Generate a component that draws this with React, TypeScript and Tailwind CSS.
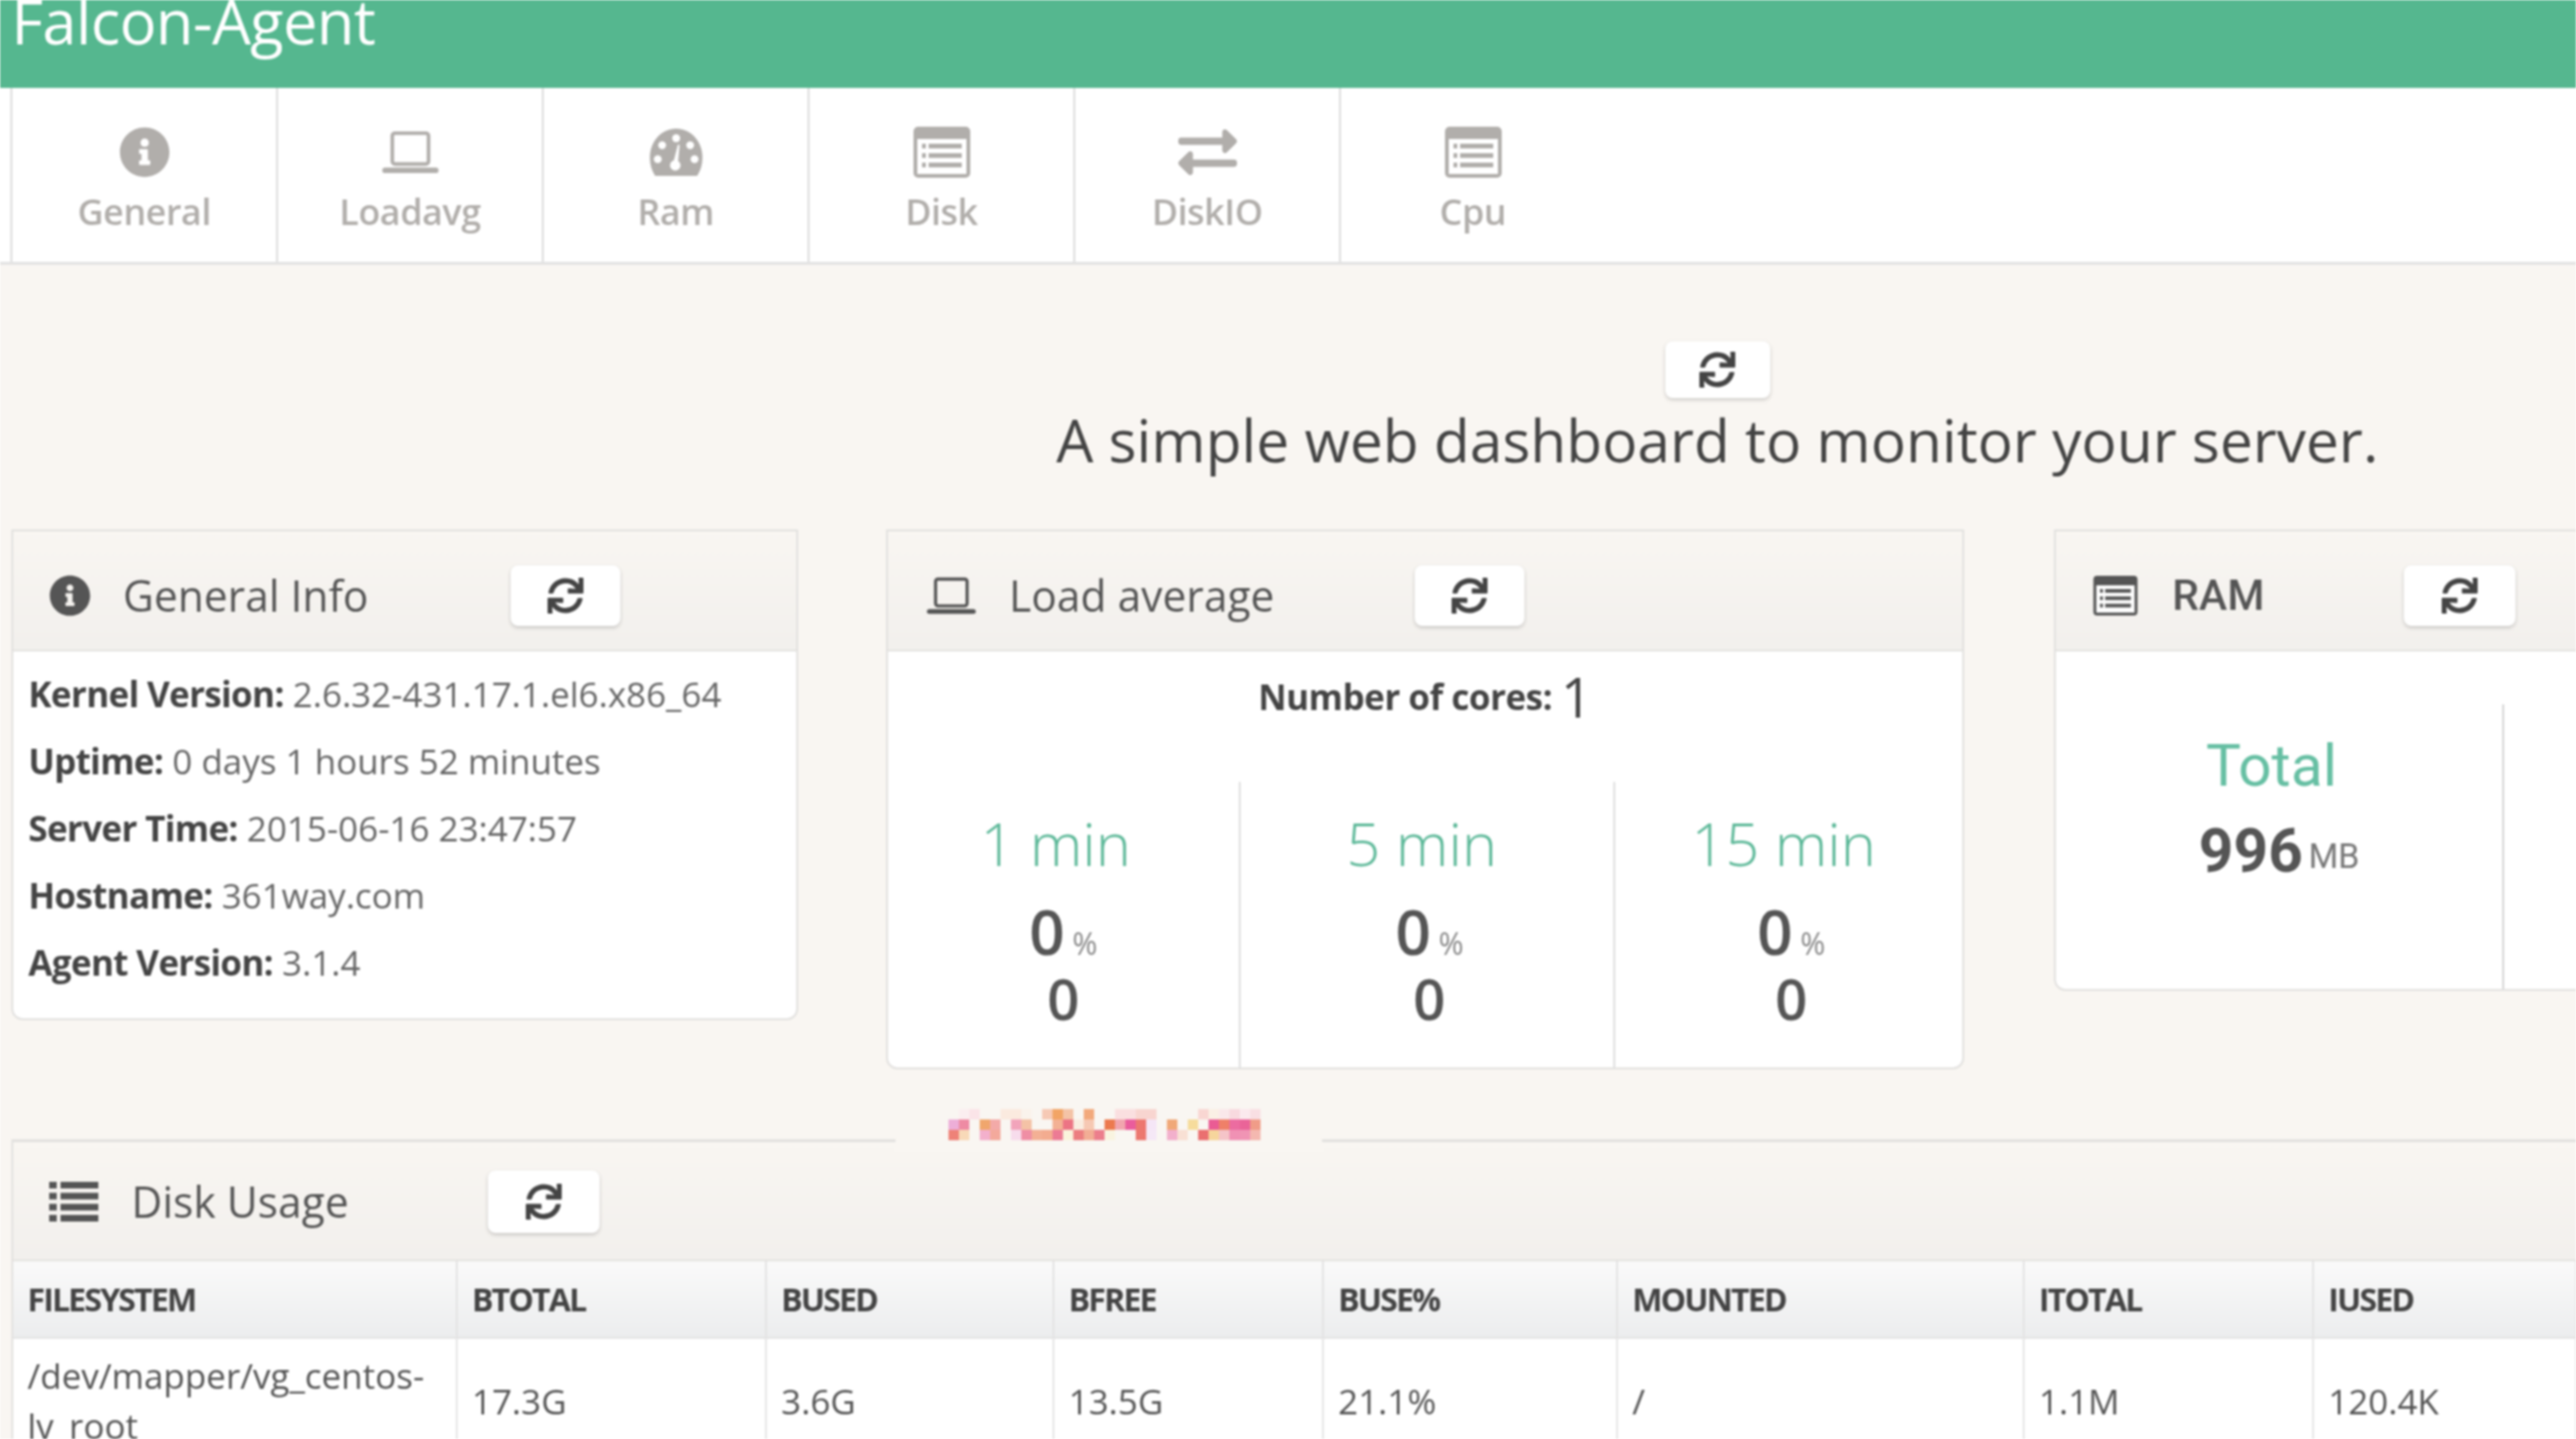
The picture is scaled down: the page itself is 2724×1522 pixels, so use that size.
import React from "react";
import { FaExchangeAlt, FaInfoCircle, FaSync } from "react-icons/fa";

type IconProps = { className?: string };

const LaptopIcon = ({ className }: IconProps) => (
  <svg viewBox="0 0 60 48" className={className} fill="none" stroke="currentColor">
    <rect x="10" y="3" width="40" height="34" rx="3" strokeWidth="4" />
    <path d="M2 44h56" strokeWidth="6" strokeLinecap="round" />
  </svg>
);

const ListAltIcon = ({ className }: IconProps) => (
  <svg viewBox="0 0 60 54" className={className} fill="currentColor">
    <rect x="0" y="0" width="60" height="54" rx="5" />
    <rect x="4" y="13" width="52" height="37" fill="#fff" />
    <rect x="9" y="18" width="4" height="5" />
    <rect x="9" y="28" width="4" height="5" />
    <rect x="9" y="38" width="4" height="5" />
    <rect x="16" y="18" width="35" height="5" />
    <rect x="16" y="28" width="35" height="5" />
    <rect x="16" y="38" width="35" height="5" />
  </svg>
);

const ListIcon = ({ className }: IconProps) => (
  <svg viewBox="0 0 52 42" className={className} fill="currentColor">
    <rect x="0" y="0" width="8" height="7" />
    <rect x="12" y="0" width="40" height="7" />
    <rect x="0" y="11.6" width="8" height="7" />
    <rect x="12" y="11.6" width="40" height="7" />
    <rect x="0" y="23.3" width="8" height="7" />
    <rect x="12" y="23.3" width="40" height="7" />
    <rect x="0" y="35" width="8" height="7" />
    <rect x="12" y="35" width="40" height="7" />
  </svg>
);

const GaugeIcon = ({ className }: IconProps) => (
  <svg viewBox="0 0 60 54" className={className} fill="currentColor">
    <path d="M6 54C2 48 0 41 0 33 0 15 13 0 30 0s30 15 30 33c0 8-2 15-6 21z" />
    <g fill="#fff">
      <circle cx="30" cy="11" r="4.5" />
      <circle cx="14" cy="19" r="4.5" />
      <circle cx="46" cy="19" r="4.5" />
      <circle cx="9" cy="35" r="4.5" />
      <circle cx="51" cy="35" r="4.5" />
      <circle cx="29" cy="42" r="6" />
      <path d="M27 38l5-20 2 1-2 21z" />
    </g>
  </svg>
);

const RefreshButton = ({ className }: IconProps) => (
  <button className={`flex shrink-0 items-center justify-center rounded-lg bg-white text-[#444] shadow-[0_2px_4px_rgba(0,0,0,0.18)] ${className}`}>
    <FaSync className="h-[38px] w-[38px]" />
  </button>
);

const tabs = [
  { label: "General", icon: <FaInfoCircle className="h-[54px] w-[54px]" /> },
  { label: "Loadavg", icon: <LaptopIcon className="h-[46px] w-[60px]" /> },
  { label: "Ram", icon: <GaugeIcon className="h-[50px] w-[62px]" /> },
  { label: "Disk", icon: <ListAltIcon className="h-[54px] w-[64px]" /> },
  { label: "DiskIO", icon: <FaExchangeAlt className="h-[62px] w-[62px]" /> },
  { label: "Cpu", icon: <ListAltIcon className="h-[54px] w-[64px]" /> },
];

const CardHeader = ({
  icon,
  title,
  titleClass,
  iconClass,
  buttonClass,
  headerClass,
}: {
  icon: React.ReactNode;
  title: string;
  titleClass: string;
  iconClass: string;
  buttonClass: string;
  headerClass: string;
}) => (
  <div className={`flex items-center border-b-2 border-[#e4e3e0] bg-gradient-to-b from-[#f9f6f2] to-[#f2f0ed] ${headerClass}`}>
    <span className={`flex shrink-0 items-center text-[#555] ${iconClass}`}>{icon}</span>
    <span className={`shrink-0 text-[45px] font-medium text-[#555] ${titleClass}`}>{title}</span>
    <RefreshButton className={buttonClass} />
  </div>
);

const generalInfo = [
  ["Kernel Version:", "2.6.32-431.17.1.el6.x86_64"],
  ["Uptime:", "0 days 1 hours 52 minutes"],
  ["Server Time:", "2015-06-16 23:47:57"],
  ["Hostname:", "361way.com"],
  ["Agent Version:", "3.1.4"],
];

const loadColumns = [
  { label: "1 min", width: "w-[372px]", border: "" },
  { label: "5 min", width: "w-[398px] pl-[5px]", border: "border-l-2 border-[#dedede]" },
  { label: "15 min", width: "w-[370px] pl-[5px]", border: "border-l-2 border-[#dedede]" },
];

const columns = [
  { name: "FILESYSTEM", value: "/dev/mapper/vg_centos-lv_root", width: "w-[469px]" },
  { name: "BTOTAL", value: "17.3G", width: "w-[327px]" },
  { name: "BUSED", value: "3.6G", width: "w-[304px]" },
  { name: "BFREE", value: "13.5G", width: "w-[285px]" },
  { name: "BUSE%", value: "21.1%", width: "w-[311px]" },
  { name: "MOUNTED", value: "/", width: "w-[430px]" },
  { name: "ITOTAL", value: "1.1M", width: "w-[306px]" },
  { name: "IUSED", value: "120.4K", width: "w-[278px]" },
  { name: "", value: "", width: "w-[100px]" },
];

// mosaic over the watermark, one string per row, "" is an empty cell
const mosaic = [
  ["", "#fbeef0", "#fbe4e8", "", "", "#fbeadf", "#fbeadf", "#faf3ec", "", "#f6c9b5", "#f2a465", "#f4c3a6", "", "#f2a97c", "", "", "#fadfe0", "#fadfe0", "#f8d5d0", "#f8d5d0", "", "", "", "", "#f9d6d2", "#faf0e5", "#fae8ea", "#f8d9df", "#fbe9ee", "#f9dfe3"],
  ["#edaed8", "#ee8ba3", "", "#f0a66d", "#f3aaa8", "", "#f2a4bb", "#f4c2a6", "", "", "#f3b194", "#ec7484", "#f9ece0", "#f6c8b3", "", "#ec7a4f", "#f1a5ae", "#ea5c9c", "#ed7770", "#f5e6f6", "", "#f0a878", "", "#f6dc9c", "", "#ea5c94", "#ef8068", "#ec6ca0", "#ea6498", "#f09c88"],
  ["#ee8278", "#f8d9b8", "", "#f3b0cc", "#f3a99c", "", "#f7dcec", "#ef8ea4", "#f3b095", "#f3ac90", "#ec7b94", "#faf3dc", "#ec7e80", "#f2ad95", "#ec7e8c", "#f9f4e0", "", "", "#ec7870", "#f5e8f6", "", "#f2b0cc", "#f8e0d4", "", "#ea7070", "#f6d59c", "#f5c4c8", "#f091b4", "#f094b4", "#f4b8b0"],
];

export default function App() {
  return (
    <div className="relative h-[1522px] w-full overflow-hidden bg-[#f9f6f2] font-['Open_Sans',sans-serif] text-[#555] blur-[1.2px]">
      <header className="flex h-[93px] items-start overflow-hidden bg-[#55b78f] pl-[12px]">
        <h1 className="mt-[-8px] text-[65px] leading-[60px] font-medium tracking-[-0.7px] text-white">Falcon-Agent</h1>
      </header>

      <nav className="flex h-[187px] border-b-[3px] border-[#e2e2e2] bg-white pl-[11px]">
        {tabs.map((tab) => (
          <div key={tab.label} className="flex w-[281px] flex-col items-center border-l-2 border-[#dcdcdc] pt-[40px] text-[#b1aeab]">
            <span className="flex h-[56px] items-center">{tab.icon}</span>
            <span className="mt-[8px] text-[38px] leading-[52px] font-semibold tracking-[-0.5px]">{tab.label}</span>
          </div>
        ))}
      </nav>

      <section className="ml-auto flex w-[1816px] flex-col items-center pt-[81px]">
        <RefreshButton className="h-[60px] w-[111px]" />
        <p className="mt-[3px] text-[62px] leading-[82px] text-[#444]">A simple web dashboard to monitor your server.</p>
      </section>

      <div className="mt-[54px] flex items-start pl-[12px]">
        <div className="w-[832px] shrink-0 overflow-hidden rounded-b-[12px] border-2 border-[#e2e1df] bg-white">
          <CardHeader
            icon={<FaInfoCircle className="h-[44px] w-[44px]" />}
            title="General Info"
            titleClass="w-[410px]"
            iconClass="w-[78px] pl-[38px] box-content"
            buttonClass="h-[64px] w-[116px]"
            headerClass="h-[127px] pt-[10px]"
          />
          <div className="px-[16px] pt-[9px] pb-[24px] text-[37px] leading-[71px] text-[#666]">
            {generalInfo.map(([label, value]) => (
              <div key={label} className="whitespace-nowrap">
                <b className="font-bold tracking-[-0.7px] text-[#444]">{label}</b> {value}
              </div>
            ))}
          </div>
        </div>

        <div className="ml-[93px] w-[1140px] shrink-0 overflow-hidden rounded-b-[12px] border-2 border-[#e2e1df] bg-white">
          <CardHeader
            icon={<LaptopIcon className="h-[40px] w-[52px]" />}
            title="Load average"
            titleClass="w-[429px]"
            iconClass="w-[87px] pl-[41px] box-content"
            buttonClass="h-[64px] w-[116px]"
            headerClass="h-[127px] pt-[10px]"
          />
          <div className="flex h-[138px] items-center justify-center pb-[42px] text-[37px] font-bold tracking-[-0.5px] text-[#444]">
            Number of cores:&nbsp;<span className="text-[58px] leading-[60px] font-normal tracking-normal">1</span>
          </div>
          <div className="flex h-[302px]">
            {loadColumns.map((col) => (
              <div key={col.label} className={`flex flex-col items-center pt-[34px] ${col.width} ${col.border}`}>
                <div className="pr-[16px] text-[63px] leading-[62px] font-light text-[#5cb898]">{col.label}</div>
                <div className="mt-[31px] text-[66px] leading-[60px] font-semibold">
                  0<span className="ml-[8px] text-[32px] font-normal text-[#888]">%</span>
                </div>
                <div className="text-[60px] leading-[57px] font-semibold">0</div>
              </div>
            ))}
          </div>
        </div>

        <div className="ml-[95px] w-[830px] shrink-0 overflow-hidden rounded-bl-[12px] border-2 border-[#e2e1df] bg-white font-['Roboto',sans-serif]">
          <CardHeader
            icon={<ListAltIcon className="h-[42px] w-[50px]" />}
            title="RAM"
            titleClass="w-[245px] font-['Roboto',sans-serif] font-bold text-[42px]"
            iconClass="w-[85px] pl-[38px] box-content"
            buttonClass="h-[64px] w-[118px]"
            headerClass="h-[127px] pt-[10px]"
          />
          <div className="flex h-[357px] pt-[56px]">
            <div className="flex w-[474px] flex-col items-center border-r-2 border-[#d5d5d5] pt-[32px]">
              <div className="pr-[16px] text-[62px] leading-[66px] text-[#66bfa3]">Total</div>
              <div className="mt-[22px] text-[64px] leading-[72px] font-bold">
                996<span className="relative top-[-4px] ml-[6px] text-[36px] font-normal text-[#777]">MB</span>
              </div>
            </div>
          </div>
        </div>
      </div>

      <div className="relative mt-[74px] ml-[12px] w-[2800px] border-t-[3px] border-l-2 border-[#e2e1df] bg-white">
        <CardHeader
          icon={<ListIcon className="h-[42px] w-[52px]" />}
          title="Disk Usage"
          titleClass="w-[377px]"
          iconClass="w-[87px] pl-[38px] box-content"
          buttonClass="h-[66px] w-[118px]"
          headerClass="h-[126px] pt-[2px]"
        />
        <table className="w-[2810px] table-fixed border-collapse">
          <thead>
            <tr className="bg-gradient-to-b from-[#fafafa] to-[#ecedee]">
              {columns.map((col) => (
                <th key={col.name} className={`h-[81px] border-r-2 border-b-2 border-[#e3e3e3] pl-[15px] text-left text-[34px] font-bold tracking-[-2px] text-[#444] ${col.width}`}>
                  {col.name}
                </th>
              ))}
            </tr>
          </thead>
          <tbody>
            <tr>
              {columns.map((col) => (
                <td key={col.name} className="border-r-2 border-[#e6e6e6] px-[15px] py-[12px] text-[37px] leading-[53px] text-[#555]">
                  {col.value}
                </td>
              ))}
            </tr>
          </tbody>
        </table>
      </div>

      {/* blurred watermark sits over the disk card top border */}
      <div className="absolute top-[1190px] left-[947px] flex h-[28px] w-[451px] bg-[#f9f6f2]" />
      <div className="absolute top-[1173px] left-[1003px] flex flex-col">
        {mosaic.map((row, r) => (
          <div key={r} className="flex">
            {row.map((color, c) => (
              <span key={c} className="h-[11px] w-[11px]" style={{ backgroundColor: color || "transparent" }} />
            ))}
          </div>
        ))}
      </div>
    </div>
  );
}
